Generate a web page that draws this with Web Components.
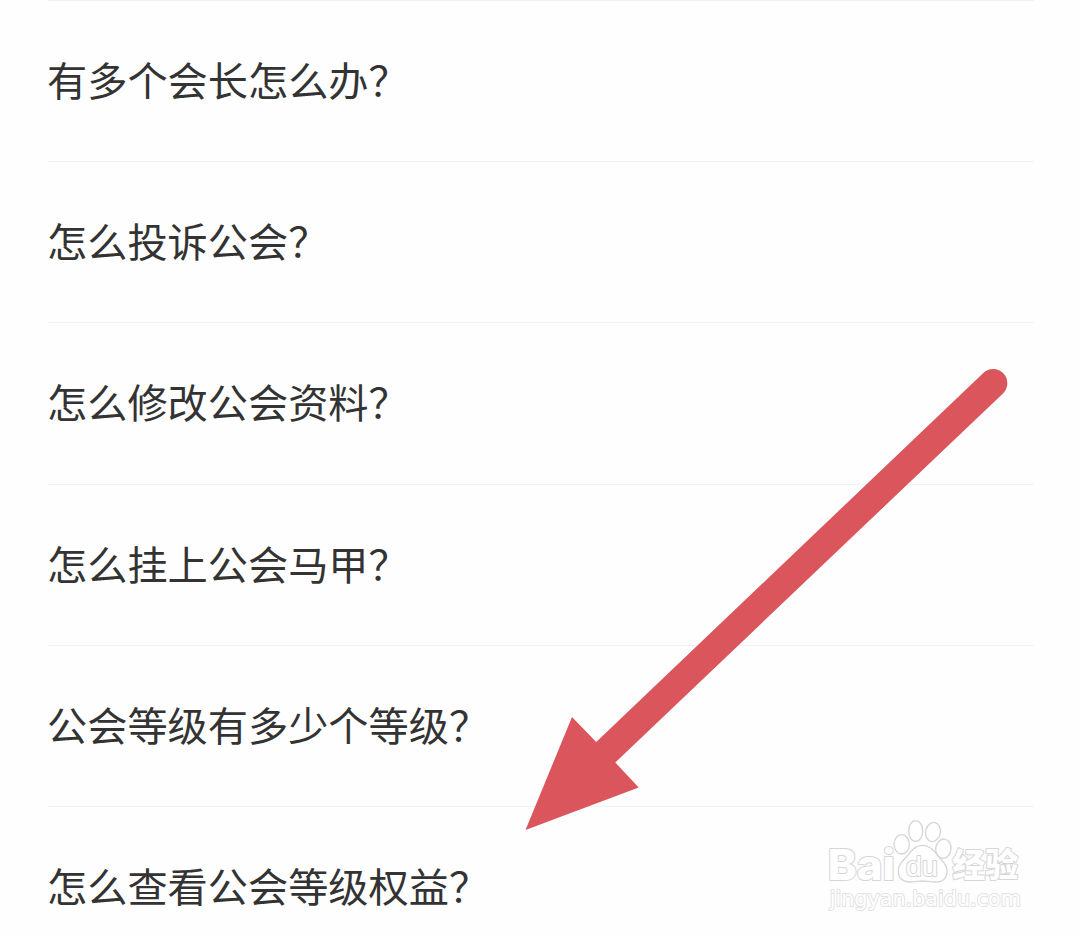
<!DOCTYPE html>
<html lang="zh-CN">
<head>
<meta charset="utf-8">
<title>公会常见问题</title>
<style>
    html, body{
        margin:0;
        height:936px;
        overflow:hidden;
        background:#fefefe;
    }
    body{
        position:relative;
        font-family:"Noto Sans CJK SC", sans-serif;
        color:#333;
    }
</style>
</head>
<body>
<faq-list>
    <faq-item>有多个会长怎么办？</faq-item>
    <faq-item>怎么投诉公会？</faq-item>
    <faq-item>怎么修改公会资料？</faq-item>
    <faq-item>怎么挂上公会马甲？</faq-item>
    <faq-item>公会等级有多少个等级？</faq-item>
    <faq-item>怎么查看公会等级权益？</faq-item>
</faq-list>
<pointer-arrow></pointer-arrow>
<site-watermark></site-watermark>

<script>
function defineElement(name, html) {
  const template = document.createElement('template');
  template.innerHTML = html;

  customElements.define(name, class extends HTMLElement {
    constructor() {
      super();
      const shadow = this.attachShadow({mode: 'open'});
      shadow.append(template.content.cloneNode(true));
    }
  });
}

defineElement('faq-list', `
<style>
    :host{
        display:flex;
        flex-direction:column;
        box-sizing:border-box;
        padding:0 46px 0 48px;
    }
</style>
<slot></slot>
`);

defineElement('faq-item', `
<style>
    :host{
        display:flex;
        align-items:center;
        box-sizing:border-box;
        flex:none;
        height:161.2px;
        padding-bottom:4px;
        border-top:1px solid #f1f2f2;
        font-size:40.2px;
        line-height:60px;
        white-space:nowrap;
    }
    span{margin-left:-1px;}
</style>
<span><slot></slot></span>
`);

// red arrow lying over the list
defineElement('pointer-arrow', `
<style>
    :host{
        display:block;
        position:absolute;
        left:520px;
        top:360px;
        width:500px;
        height:480px;
        pointer-events:none;
    }
    svg{display:block;}
</style>
<svg width="500" height="480" viewBox="520 360 500 480">
    <path fill="#da565c" d="M525.5 830 L572 717 L596.2 742 L983.3 373 A14 14 0 0 1 1003 393.4 L615.3 762.5 L638.7 787.5 Z"/>
</svg>
`);

defineElement('site-watermark', `
<style>
    :host{
        display:block;
        position:absolute;
        left:810px;
        top:800px;
        width:230px;
        height:130px;
        pointer-events:none;
    }
    svg{display:block;}
    text, .paw{
        fill:#fff;
        stroke:#d6d6d6;
        stroke-width:6;
        stroke-linejoin:round;
        paint-order:stroke;
    }
    .paw{stroke-width:4;paint-order:normal;}
    .url{stroke:#e2e2e2;}
</style>
<svg width="230" height="130" viewBox="0 0 690 390">
    <g class="paw">
        <ellipse cx="275" cy="133" rx="23" ry="29"/>
        <ellipse cx="317" cy="93" rx="21" ry="31"/>
        <ellipse cx="369" cy="96" rx="22" ry="29" transform="rotate(12 369 96)"/>
        <ellipse cx="400" cy="146" rx="23" ry="29" transform="rotate(8 400 146)"/>
        <path d="M338 136 C315 136 303 153 293 167 C280 182 265 190 265 214 C265 235 280 246 300 246 C316 246 325 243 338 243 C351 243 360 246 376 246 C398 246 411 234 411 212 C411 190 394 181 383 167 C372 150 360 136 338 136 Z"/>
    </g>
    <text x="53" y="241" font-family="Inter, sans-serif" font-size="128" font-weight="800" textLength="202" lengthAdjust="spacingAndGlyphs">Bai</text>
    <text x="287" y="227" font-family="Liberation Sans, sans-serif" font-size="81" textLength="97" lengthAdjust="spacingAndGlyphs">du</text>
    <text x="427" y="231" font-family="Noto Sans CJK SC, sans-serif" font-size="99" font-weight="900">经验</text>
    <text class="url" x="59" y="318" font-family="DejaVu Sans, sans-serif" font-size="65" textLength="574" lengthAdjust="spacingAndGlyphs">jingyan.baidu.com</text>
</svg>
`);
</script>
</body>
</html>
